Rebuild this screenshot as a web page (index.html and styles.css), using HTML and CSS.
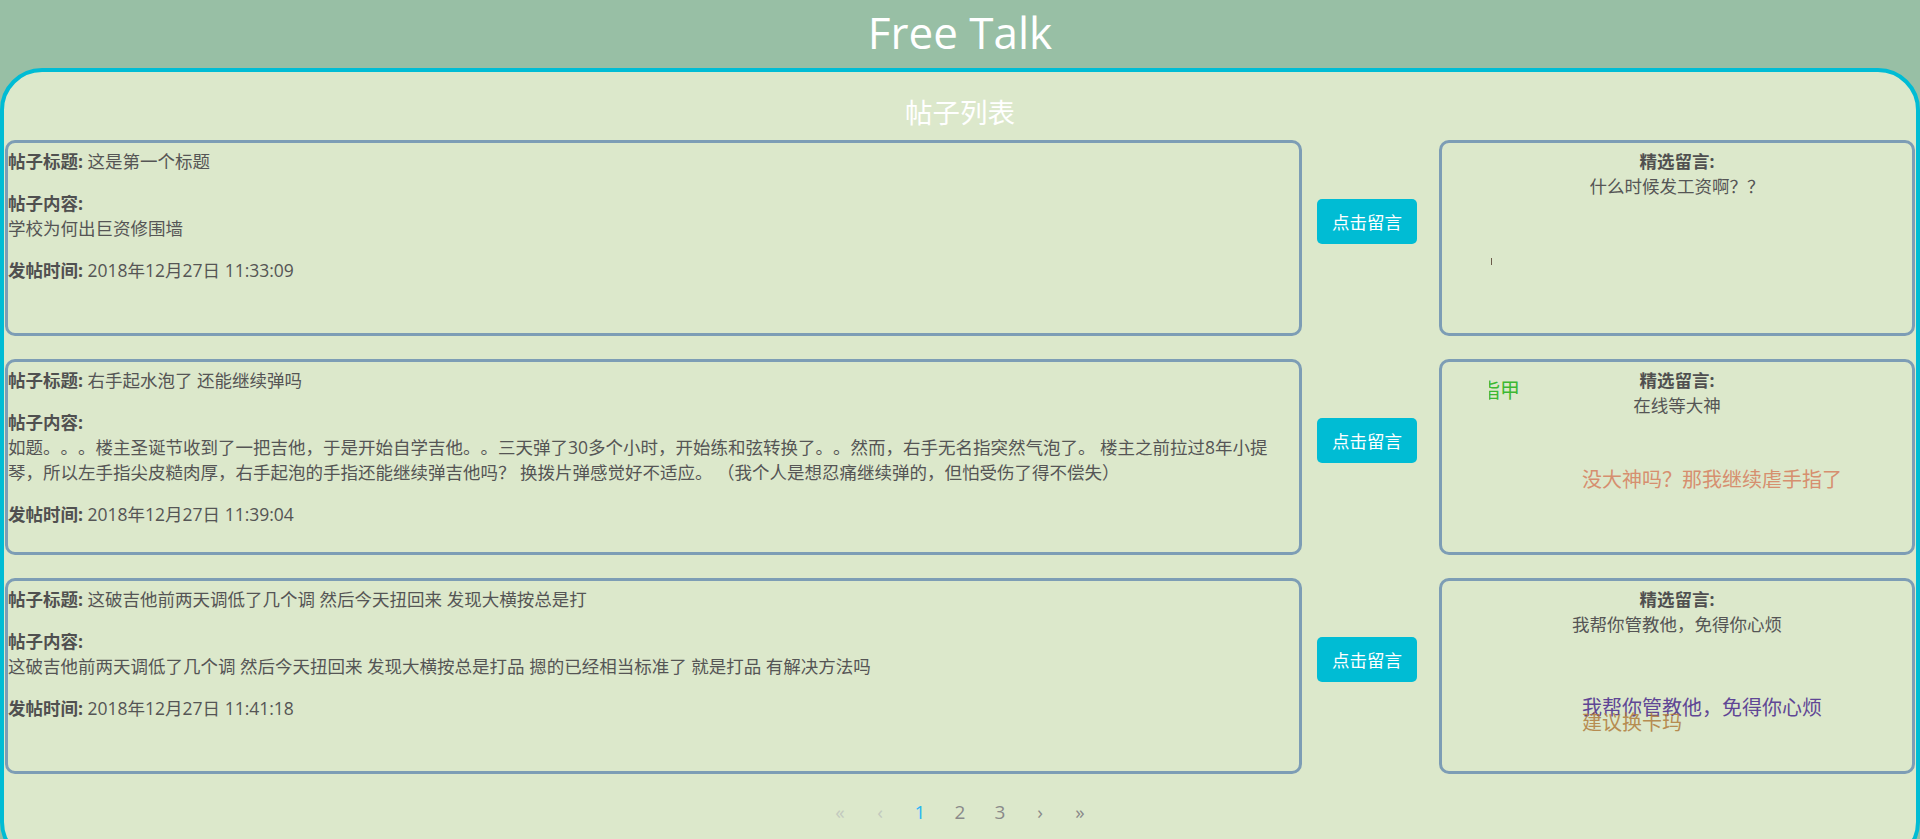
FILE: index.html
```html
<!DOCTYPE html>
<html lang="zh-CN">
<head>
<meta charset="utf-8">
<title>Free Talk</title>
<link rel="stylesheet" href="styles.css">
</head>
<body>
<header class="site-header"><h1 class="site-title">Free Talk</h1></header>
<main class="board">
  <h2 class="board-title">帖子列表</h2>
  <div class="posts">
    <div class="row">
      <div class="post">
        <p><b>帖子标题:</b> 这是第一个标题</p>
        <p><b>帖子内容:</b><br>学校为何出巨资修围墙</p>
        <p><b>发帖时间:</b> 2018年12月27日 11:33:09</p>
      </div>
      <div class="action"><button class="btn">点击留言</button></div>
      <div class="featured">
        <b>精选留言:</b><br>什么时候发工资啊？？
        <div class="danmaku"><span class="dm-sliver"></span></div>
      </div>
    </div>
    <div class="row">
      <div class="post">
        <p><b>帖子标题:</b> 右手起水泡了 还能继续弹吗</p>
        <p><b>帖子内容:</b><br>如题。。。楼主圣诞节收到了一把吉他，于是开始自学吉他。。三天弹了30多个小时，开始练和弦转换了。。然而，右手无名指突然气泡了。 楼主之前拉过8年小提琴，所以左手指尖皮糙肉厚，右手起泡的手指还能继续弹吉他吗？ 换拨片弹感觉好不适应。 （我个人是想忍痛继续弹的，但怕受伤了得不偿失）</p>
        <p><b>发帖时间:</b> 2018年12月27日 11:39:04</p>
      </div>
      <div class="action"><button class="btn">点击留言</button></div>
      <div class="featured">
        <b>精选留言:</b><br>在线等大神
        <div class="danmaku">
          <span class="dm dm-green">指甲</span>
          <span class="dm dm-orange">没大神吗？那我继续虐手指了</span>
        </div>
      </div>
    </div>
    <div class="row">
      <div class="post">
        <p><b>帖子标题:</b> 这破吉他前两天调低了几个调 然后今天扭回来 发现大横按总是打</p>
        <p><b>帖子内容:</b><br>这破吉他前两天调低了几个调 然后今天扭回来 发现大横按总是打品 摁的已经相当标准了 就是打品 有解决方法吗</p>
        <p><b>发帖时间:</b> 2018年12月27日 11:41:18</p>
      </div>
      <div class="action"><button class="btn">点击留言</button></div>
      <div class="featured">
        <b>精选留言:</b><br>我帮你管教他，免得你心烦
        <div class="danmaku">
          <span class="dm dm-purple">我帮你管教他，免得你心烦</span>
          <span class="dm dm-brown">建议换卡玛</span>
        </div>
      </div>
    </div>
  </div>
  <nav class="pager">
    <span class="pg pg-off">«</span>
    <span class="pg pg-off">‹</span>
    <span class="pg pg-on">1</span>
    <span class="pg">2</span>
    <span class="pg">3</span>
    <span class="pg">›</span>
    <span class="pg">»</span>
  </nav>
</main>
</body>
</html>
```
FILE: styles.css
```css
html, body {
  margin: 0;
  padding: 0;
}
body {
  background: #98bfa5;
  font-family: "Open Sans", "Noto Sans CJK SC", sans-serif;
  color: #555;
  overflow: hidden;
  text-spacing-trim: space-all;
}
.site-header {
  height: 68px;
  text-align: center;
}
.site-title {
  margin: 0;
  font-family: "Open Sans", "Noto Sans CJK SC", sans-serif;
  font-size: 44px;
  font-weight: normal;
  line-height: 64px;
  color: #fff;
}
.board {
  height: 788px;
  border: 4px solid #00bcd4;
  border-radius: 42px;
  background: #dce8cb;
  display: flex;
  flex-direction: column;
}
.board-title {
  margin: 0;
  padding-top: 19px;
  height: 49px;
  line-height: 40px;
  font-family: "Noto Sans CJK SC", sans-serif;
  font-size: 27.5px;
  font-weight: normal;
  text-align: center;
  color: #fff;
}
.posts {
  padding: 0 1px;
  display: flex;
  flex-direction: column;
  gap: 23px;
}
.row {
  display: flex;
  height: 196px;
}
.post {
  box-sizing: border-box;
  width: 1297px;
  height: 196px;
  border: 3px solid #7d9db5;
  border-radius: 10px;
  padding: 6px 0 0 0;
  font-size: 17.5px;
  line-height: 25px;
}
.post p {
  margin: 0 0 17px;
}
.post b, .featured b {
  font-weight: bold;
  color: #505050;
}
.action {
  margin: 0 22px 0 15px;
  padding-top: 59px;
}
.btn {
  width: 100px;
  height: 45px;
  border: 0;
  border-radius: 5px;
  background: #00bcd4;
  color: #fff;
  font-family: "Noto Sans CJK SC", sans-serif;
  font-size: 17.5px;
  padding: 0;
}
.featured {
  position: relative;
  box-sizing: border-box;
  width: 476px;
  height: 196px;
  border: 3px solid #7d9db5;
  border-radius: 10px;
  padding-top: 6px;
  text-align: center;
  font-size: 17.5px;
  line-height: 25px;
}
.danmaku {
  position: absolute;
  left: 47px;
  right: 0;
  top: 0;
  bottom: 0;
  overflow: hidden;
  text-align: left;
}
.dm {
  position: absolute;
  white-space: nowrap;
  font-family: "Noto Sans CJK SC", sans-serif;
  font-size: 20px;
  line-height: 24px;
}
.dm-green { left: -9px; top: 16px; color: #3cb832; }
.dm-orange { left: 93px; top: 105px; color: #d68f6f; }
.dm-purple { left: 93px; top: 114px; color: #4a2a8c; opacity: 0.85; }
.dm-brown { left: 93px; top: 129px; color: #b07c3c; opacity: 0.85; }
.dm-sliver {
  position: absolute;
  left: 2px;
  top: 115px;
  width: 1px;
  height: 7px;
  background: #6b5a4a;
}
.pager {
  display: flex;
  justify-content: center;
  margin-top: 22px;
  font-family: "Open Sans", sans-serif;
  font-size: 19px;
  line-height: 32px;
  color: #8a8a8a;
}
.pg {
  width: 40px;
  text-align: center;
}
.pg-off { color: #c3cabf; }
.pg-on { color: #29b6f6; }
```
